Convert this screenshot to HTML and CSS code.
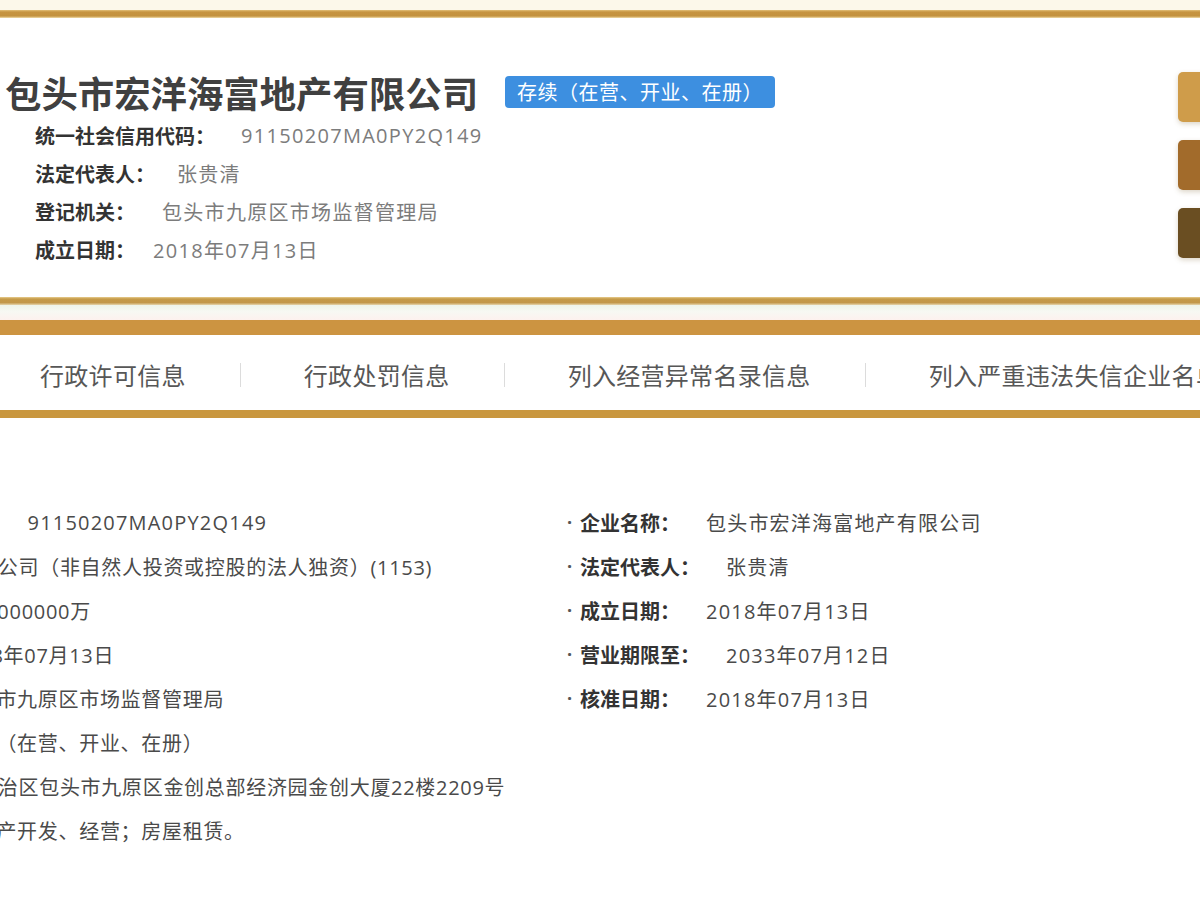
FILE: index.html
```html
<!DOCTYPE html>
<html lang="zh-CN">
<head>
<meta charset="utf-8">
<title>包头市宏洋海富地产有限公司</title>
<link rel="stylesheet" href="styles.css">
</head>
<body>
<div class="top-strip"></div>
<div class="gold-line"></div>

<section class="card">
  <div class="card-main">
    <div class="head-row">
      <h1 class="company">包头市宏洋海富地产有限公司</h1>
      <span class="badge">存续（在营、开业、在册）</span>
    </div>
    <div class="info-row"><span class="info-label">统一社会信用代码：</span><span class="info-value gap-a">91150207MA0PY2Q149</span></div>
    <div class="info-row"><span class="info-label">法定代表人：</span><span class="info-value gap-b">张贵清</span></div>
    <div class="info-row"><span class="info-label">登记机关：</span><span class="info-value gap-c">包头市九原区市场监督管理局</span></div>
    <div class="info-row"><span class="info-label">成立日期：</span><span class="info-value gap-d">2018年07月13日</span></div>
  </div>
  <div class="side-btns">
    <span class="side-btn btn-1"></span>
    <span class="side-btn btn-2"></span>
    <span class="side-btn btn-3"></span>
  </div>
</section>

<div class="card-line"></div>
<div class="pale-gap"></div>

<nav class="tabs">
  <span class="tab">行政许可信息</span><span class="sep"></span>
  <span class="tab">行政处罚信息</span><span class="sep"></span>
  <span class="tab">列入经营异常名录信息</span><span class="sep"></span>
  <span class="tab">列入严重违法失信企业名单信息</span>
</nav>

<section class="details">
  <div class="col col-left">
    <div class="d-row"><span class="dot">·</span><span class="d-label">统一社会信用代码:</span><span class="d-value d-value-wide">91150207MA0PY2Q149</span></div>
    <div class="d-row"><span class="dot">·</span><span class="d-label">类型：</span><span class="d-value">有限责任公司（非自然人投资或控股的法人独资）(1153)</span></div>
    <div class="d-row"><span class="dot">·</span><span class="d-label">注册资本：</span><span class="d-value">100.000000万</span></div>
    <div class="d-row"><span class="dot">·</span><span class="d-label">成立日期：</span><span class="d-value">2018年07月13日</span></div>
    <div class="d-row"><span class="dot">·</span><span class="d-label">登记机关：</span><span class="d-value">包头市九原区市场监督管理局</span></div>
    <div class="d-row"><span class="dot">·</span><span class="d-label">登记状态：</span><span class="d-value">存续（在营、开业、在册）</span></div>
    <div class="d-row"><span class="dot">·</span><span class="d-label">住所：</span><span class="d-value">内蒙古自治区包头市九原区金创总部经济园金创大厦22楼2209号</span></div>
    <div class="d-row"><span class="dot">·</span><span class="d-label">经营范围：</span><span class="d-value">房地产开发、经营；房屋租赁。</span></div>
  </div>
  <div class="col col-right">
    <div class="d-row"><span class="dot">·</span><span class="d-label">企业名称：</span><span class="d-value">包头市宏洋海富地产有限公司</span></div>
    <div class="d-row"><span class="dot">·</span><span class="d-label">法定代表人：</span><span class="d-value">张贵清</span></div>
    <div class="d-row"><span class="dot">·</span><span class="d-label">成立日期：</span><span class="d-value">2018年07月13日</span></div>
    <div class="d-row"><span class="dot">·</span><span class="d-label">营业期限至：</span><span class="d-value">2033年07月12日</span></div>
    <div class="d-row"><span class="dot">·</span><span class="d-label">核准日期：</span><span class="d-value">2018年07月13日</span></div>
  </div>
</section>
</body>
</html>
```
FILE: styles.css
```css
* { box-sizing: border-box; }

html, body {
  margin: 0;
  padding: 0;
  background: #ffffff;
  width: 1200px;
  height: 900px;
  overflow: hidden;
  font-family: "Open Sans", "Noto Sans CJK SC", sans-serif;
  color: #333;
}

.top-strip {
  height: 10px;
  background: #fcf8ea;
}

.gold-line {
  height: 8px;
  background: linear-gradient(#e2bf78 0, #c69441 25%, #c3923f 75%, #f0dcaa 100%);
}

.card {
  display: flex;
  align-items: flex-start;
  height: 279px;
  background: #fff;
}

.card-main {
  flex: 1;
  padding: 54px 0 0 5px;
}

.head-row {
  display: flex;
  align-items: center;
  height: 40px;
  margin-bottom: 4px;
}

.company {
  margin: 0;
  font-family: "Noto Sans CJK SC", sans-serif;
  font-size: 36.4px;
  font-weight: 700;
  line-height: 40px;
  color: #404040;
}

.badge {
  margin-left: 27px;
  height: 32px;
  padding: 0 12px;
  border-radius: 4px;
  background: #3d8fe0;
  color: #fff;
  font-family: "Noto Sans CJK SC", sans-serif;
  font-size: 20px;
  line-height: 32px;
  letter-spacing: 0.5px;
}

.info-row {
  display: flex;
  align-items: center;
  height: 38px;
  padding-left: 30px;
  font-size: 19px;
}

.info-label {
  font-family: "Noto Sans CJK SC", sans-serif;
  font-weight: 700;
  color: #333;
  font-size: 20px;
}

.info-value {
  color: #7c7c7c;
  font-size: 20px;
  letter-spacing: 1.3px;
}

.gap-a { margin-left: 26px; }
.gap-b { margin-left: 22px; }
.gap-c { margin-left: 27px; }
.gap-d { margin-left: 18px; }

.side-btns {
  display: flex;
  flex-direction: column;
  gap: 18px;
  padding-top: 54px;
  margin-right: -38px;
}

.side-btn {
  display: block;
  width: 60px;
  height: 50px;
  border-radius: 5px;
  box-shadow: 0 2px 5px rgba(120, 90, 40, 0.25);
}

.btn-1 { background: #cf9c4a; }
.btn-2 { background: #a26b2b; }
.btn-3 { background: #6a4e22; }

.card-line {
  height: 8px;
  background: linear-gradient(#e8cd8e 0, #c59a48 25%, #c2974a 70%, #e6d6ad 100%);
}

.pale-gap {
  height: 15px;
  background: linear-gradient(#eef4ea 0, #f7f8f3 45%, #fdf1ee 100%);
}

.tabs {
  display: flex;
  align-items: center;
  height: 98px;
  padding: 4px 0 0 40px;
  border-top: 15px solid #cc9441;
  border-bottom: 8px solid #c9973f;
  white-space: nowrap;
  background: #fff;
}

.tab {
  font-family: "Noto Sans CJK SC", sans-serif;
  font-size: 24px;
  letter-spacing: 0.3px;
  color: #575757;
  flex: none;
}

.sep {
  flex: none;
  width: 1px;
  height: 24px;
  margin: 0 63px 0 54px;
  background: #dcdcdc;
}

.details {
  display: flex;
  padding-top: 82px;
}

.col-left {
  flex: none;
  width: 751px;
  margin-left: -184px;
}

.col-right {
  flex: 1;
}

.d-row {
  display: flex;
  align-items: center;
  height: 44px;
  white-space: nowrap;
}

.dot {
  width: 13px;
  font-size: 18px;
  font-weight: 700;
  color: #555;
}

.d-label {
  font-family: "Noto Sans CJK SC", sans-serif;
  font-weight: 700;
  font-size: 20px;
  color: #333;
}

.d-value {
  margin-left: 26px;
  font-size: 20px;
  color: #4a4a4a;
  letter-spacing: 1.2px;
}

.col-left .d-value {
  letter-spacing: 0.7px;
}

.col-left .d-value-wide {
  margin-left: 32px;
  letter-spacing: 1.2px;
}
```
